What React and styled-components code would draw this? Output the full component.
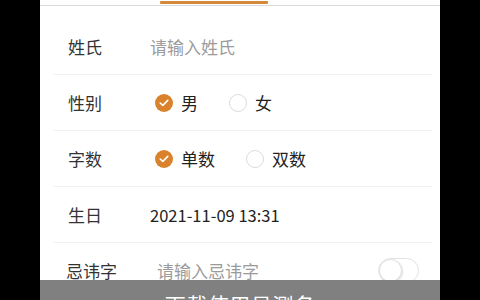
import React, { useState } from "react";
import styled, { createGlobalStyle } from "styled-components";

const Global = createGlobalStyle`
  html, body { margin: 0; padding: 0; background: #000; }
  body { font-family: "Noto Sans CJK SC", "Noto Sans", sans-serif; }
  *, *::before, *::after { box-sizing: border-box; }
`;

const Panel = styled.div`
  position: relative;
  width: 400px;
  height: 300px;
  margin: 0 auto;
  background: #fff;
  overflow: hidden;
`;

const TabBar = styled.div`
  display: flex;
  align-items: flex-end;
  height: 6px;
  padding-left: 120px;
  border-bottom: 1px solid #d9d9d9;
`;

const Indicator = styled.div`
  width: 108px;
  height: 3px;
  margin-bottom: 1px;
  border-radius: 1px;
  background: #d4883a;
`;

const Form = styled.div`
  display: flex;
  flex-direction: column;
  padding-top: 13px;
`;

const Row = styled.div`
  display: flex;
  align-items: center;
  height: ${(p) => (p.$last ? 55 : 56)}px;
  margin: 0 8px 0 13px;
  border-bottom: ${(p) => (p.$last ? "none" : "1px solid #f1f1f1")};
`;

const Label = styled.div`
  flex: none;
  width: ${(p) => p.$w}px;
  padding-left: ${(p) => p.$pl}px;
  font-size: 17px;
  color: #333;
`;

const Placeholder = styled.div`
  flex: 1;
  font-size: 17px;
  color: #9b9b9b;
`;

const Value = styled.div`
  flex: 1;
  font-size: 16.5px;
  color: #222;
`;

const Options = styled.div`
  display: flex;
  align-items: center;
  gap: 31px;
  padding-left: 5px;
`;

const Option = styled.div`
  display: flex;
  align-items: center;
  gap: 8px;
  font-size: 17px;
  color: #222;
`;

const Dot = styled.span`
  display: flex;
  align-items: center;
  justify-content: center;
  width: 18px;
  height: 18px;
  border-radius: 50%;
  background: ${(p) => (p.$on ? "#d9822b" : "#fff")};
  border: ${(p) => (p.$on ? "none" : "1px solid #dcdcdc")};
`;

const Toggle = styled.div`
  flex: none;
  width: 41px;
  height: 25px;
  margin-right: 13px;
  border-radius: 13px;
  border: 1px solid #e3e3e3;
  background: #fff;
  display: flex;
  align-items: center;
`;

const Knob = styled.div`
  width: 23px;
  height: 23px;
  border-radius: 50%;
  background: #fff;
  border: 1px solid #e0e0e0;
  box-shadow: 1px 1px 2px rgba(0, 0, 0, 0.12);
`;

const BottomBar = styled.div`
  position: absolute;
  left: 0;
  right: 0;
  top: 280px;
  height: 44px;
  padding-top: 9px;
  background: #808080;
  color: #fff;
  text-align: center;
  font-size: 21px;
  line-height: 30px;
  letter-spacing: 0.5px;
`;

const Check = () => (
  <svg width="10" height="8" viewBox="0 0 10 8">
    <polyline points="1.2,4 3.8,6.4 8.8,1.4" fill="none" stroke="#fff" strokeWidth="1.6" strokeLinecap="round" strokeLinejoin="round" />
  </svg>
);

const Radio = ({ on, children }) => (
  <Option>
    <Dot $on={on}>{on && <Check />}</Dot>
    {children}
  </Option>
);

export default function App() {
  const [gender] = useState("男");
  const [count] = useState("单数");
  return (
    <>
      <Global />
      <Panel>
        <TabBar>
          <Indicator />
        </TabBar>
        <Form>
          <Row>
            <Label $w={97} $pl={15}>姓氏</Label>
            <Placeholder>请输入姓氏</Placeholder>
          </Row>
          <Row>
            <Label $w={97} $pl={15}>性别</Label>
            <Options>
              {["男", "女"].map((g) => (
                <Radio key={g} on={gender === g}>{g}</Radio>
              ))}
            </Options>
          </Row>
          <Row>
            <Label $w={97} $pl={15}>字数</Label>
            <Options>
              {["单数", "双数"].map((g) => (
                <Radio key={g} on={count === g}>{g}</Radio>
              ))}
            </Options>
          </Row>
          <Row>
            <Label $w={97} $pl={15}>生日</Label>
            <Value>2021-11-09 13:31</Value>
          </Row>
          <Row $last>
            <Label $w={104} $pl={13}>忌讳字</Label>
            <Placeholder>请输入忌讳字</Placeholder>
            <Toggle>
              <Knob />
            </Toggle>
          </Row>
        </Form>
        <BottomBar>下载使用易测名</BottomBar>
      </Panel>
    </>
  );
}
